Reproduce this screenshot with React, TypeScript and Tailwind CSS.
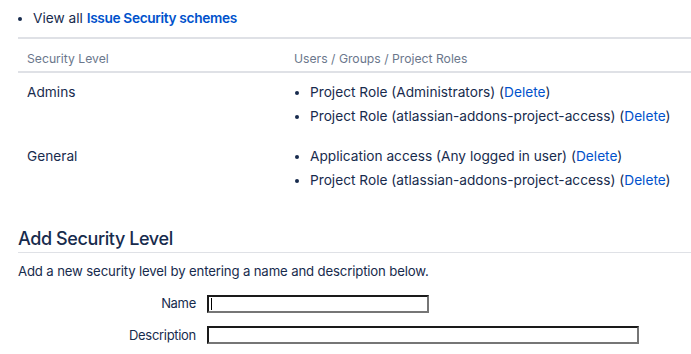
import React from "react";

const rows = [
  {
    level: "Admins",
    items: [
      "Project Role (Administrators)",
      "Project Role (atlassian-addons-project-access)",
    ],
  },
  {
    level: "General",
    items: [
      "Application access (Any logged in user)",
      "Project Role (atlassian-addons-project-access)",
    ],
  },
];

export default function App() {
  return (
    <div
      className="w-[691px] h-[354px] overflow-hidden bg-white pl-[18px] text-[#172b4d] text-[13.7px]"
      style={{ fontFamily: "Inter, 'Noto Sans', sans-serif" }}
    >
      <ul className="list-disc pl-[15px] pt-[8px] leading-[20px] marker:text-[#172b4d]">
        <li>
          View all{" "}
          <a className="text-[#0052cc] font-semibold tracking-[-0.35px]" href="#">
            Issue Security schemes
          </a>
        </li>
      </ul>
      <table className="mt-[9px] w-full border-collapse">
        <thead>
          <tr className="border-t-2 border-b-2 border-[#dfe1e6]">
            <th className="text-left font-normal text-[#6b778c] text-[12.2px] leading-[20px] pl-[9px] pt-[10px] pb-[2px] w-[267px]">
              Security Level
            </th>
            <th className="text-left font-normal text-[#6b778c] text-[12.2px] leading-[20px] pl-[9px] pt-[10px] pb-[2px]">
              Users / Groups / Project Roles
            </th>
          </tr>
        </thead>
        <tbody>
          {rows.map((r) => (
            <tr key={r.level}>
              <td className="align-top pl-[9px] pt-[9px] pb-[11px] leading-[20px]">
                {r.level}
              </td>
              <td className="align-top pt-[9px] pb-[11px] pl-[9px]">
                <ul className="list-disc pl-[16px] leading-[20px]">
                  {r.items.map((it, i) => (
                    <li key={i} className={i > 0 ? "mt-[4px]" : ""}>
                      {it} (
                      <a className="text-[#0052cc]" href="#">
                        Delete
                      </a>
                      )
                    </li>
                  ))}
                </ul>
              </td>
            </tr>
          ))}
        </tbody>
      </table>
      <h2 className="mt-[26px] text-[18px] font-medium leading-[24px] text-[#172b4d] border-b border-[#dfe1e6] pb-[1px] tracking-[-0.4px]">
        Add Security Level
      </h2>
      <p className="mt-[9px] text-[13.2px] leading-[18px] tracking-[-0.15px]">
        Add a new security level by entering a name and description below.
      </p>
      <div className="mt-[14px] flex flex-col gap-[12px]">
        <div className="flex items-center">
          <label className="w-[189px] text-right pr-[11px] text-[13px] tracking-[-0.3px]">Name</label>
          <div className="w-[222px] h-[18px] border-2 border-t-[#1a1a1a] border-l-[#1a1a1a] border-b-[#767676] border-r-[#767676] flex items-center pl-[2px]">
            <span className="w-px h-[12px] bg-black" />
          </div>
        </div>
        <div className="flex items-center">
          <label className="w-[189px] text-right pr-[11px] text-[13px] tracking-[-0.3px]">Description</label>
          <div className="w-[432px] h-[18px] border-2 border-t-[#1a1a1a] border-l-[#1a1a1a] border-b-[#767676] border-r-[#767676]" />
        </div>
      </div>
    </div>
  );
}
